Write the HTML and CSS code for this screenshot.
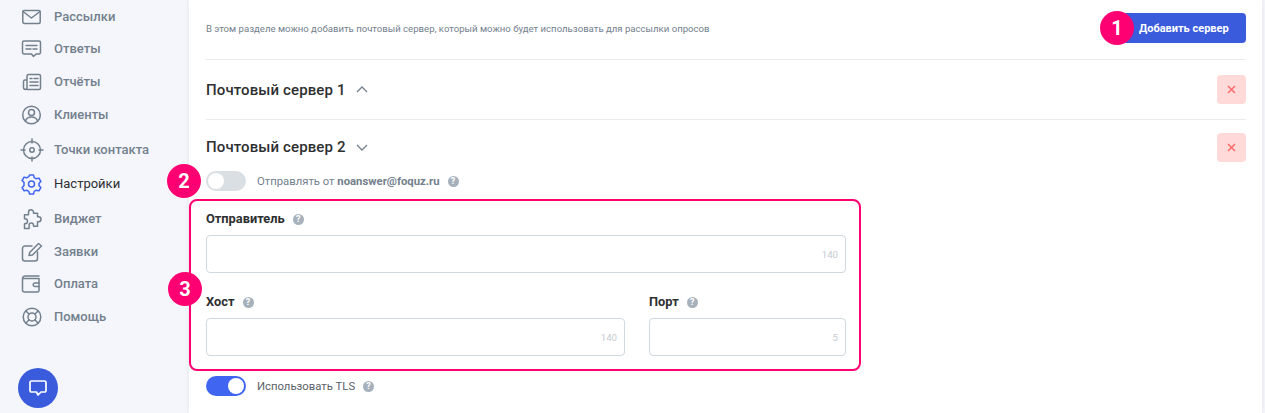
FILE: index.html
```html
<!DOCTYPE html>
<html lang="ru">
<head>
    <meta charset="UTF-8">
    <meta name="viewport" content="width=device-width, initial-scale=1.0">
    <title>Настройки</title>
    <link rel="stylesheet" href="styles.css">
</head>
<body>

<aside class="sidebar">
    <nav class="nav">
        <a class="nav-item">
            <svg class="nav-icon" width="24" height="16" viewBox="0 0 24 16"><rect x="2.800" y="1.400" width="17.400" height="13" rx="1.500"/><path d="M3 2.500l8.500 6.500 8.500-6.500"/></svg>
            Рассылки
        </a>
        <a class="nav-item">
            <svg class="nav-icon" width="24" height="18" viewBox="0 0 24 18"><path d="M4 1h15a1.500 1.500 0 0 1 1.500 1.500v10a1.500 1.500 0 0 1-1.500 1.500h-3l-2.500 2.500-2-2.500H4a1.500 1.500 0 0 1-1.500-1.500v-10A1.500 1.500 0 0 1 4 1z"/><path d="M6 5.500h11M6 9h5M13 9h4"/></svg>
            Ответы
        </a>
        <a class="nav-item">
            <svg class="nav-icon" width="24" height="18" viewBox="0 0 24 18"><path d="M7 16.500h12a1.500 1.500 0 0 0 1.500-1.500V3A1.500 1.500 0 0 0 19 1.500H8.500A1.500 1.500 0 0 0 7 3v12a1.800 1.800 0 0 1-3.500 0V8.500A1.500 1.500 0 0 1 5 7h2"/><path d="M10 5.500h2M14 5.500h4M10 9h8M10 12.500h8"/></svg>
            Отчёты
        </a>
        <a class="nav-item">
            <svg class="nav-icon" width="24" height="18" viewBox="0 0 24 18"><circle cx="11.500" cy="9" r="8.800"/><circle cx="11.500" cy="6.500" r="3"/><path d="M5.500 15c.8-2.600 3-4 6-4s5.200 1.400 6 4"/></svg>
            Клиенты
        </a>
        <a class="nav-item nav-item-tall">
            <svg class="nav-icon" width="24" height="20" viewBox="0 0 24 20"><circle cx="12" cy="10" r="8.500"/><circle cx="12" cy="10" r="2.200"/><path d="M12-1v4M12 17v4M1 10h4M19 10h4"/></svg>
            Точки контакта
        </a>
        <a class="nav-item nav-item-active">
            <svg class="nav-icon" width="24" height="20" viewBox="0 0 24 20"><circle cx="11.500" cy="10" r="3"/><path d="M9.500 1h4l.7 2.600 2.100 1.200 2.600-.7 2 3.400-1.900 1.900v2.200l1.900 1.900-2 3.400-2.600-.7-2.100 1.200-.7 2.600h-4l-.7-2.600-2.100-1.200-2.600.7-2-3.400 1.900-1.900V8.400L2.100 6.500l2-3.400 2.600.7 2.100-1.200z"/></svg>
            Настройки
        </a>
        <a class="nav-item">
            <svg class="nav-icon" width="24" height="20" viewBox="0 0 24 20"><path d="M11 .700a2.500 2.500 0 0 1 2.500 2.500v1h4v3.500h1a2.500 2.500 0 0 1 0 5h-1v4.500h-4v-1a2.200 2.200 0 0 0-4.400 0v3.200H4.500v-4.700H5a2.500 2.500 0 0 0 0-5h-.5V5.700h4V3.200A2.500 2.500 0 0 1 11 .7z"/></svg>
            Виджет
        </a>
        <a class="nav-item">
            <svg class="nav-icon" width="24" height="16" viewBox="0 1 24 16"><path d="M12 3H5a2.500 2.500 0 0 0-2.500 2.500v10A2.500 2.500 0 0 0 5 18h10a2.500 2.500 0 0 0 2.500-2.500V9"/><path d="M9 12.500l.7-3L18.500.5 21.500 3l-9 9z"/></svg>
            Заявки
        </a>
        <a class="nav-item">
            <svg class="nav-icon" width="24" height="18" viewBox="0 -1 24 18"><path d="M19 0H5a2.500 2.500 0 0 0-2.500 2.500V14A2 2 0 0 0 4.500 16h13a1.500 1.500 0 0 0 1.500-1.500V2.500H3"/><path d="M19 7h-4a1.800 1.800 0 0 0 0 3.600h4"/></svg>
            Оплата
        </a>
        <a class="nav-item">
            <svg class="nav-icon" width="24" height="18" viewBox="0 0 24 18"><circle cx="12" cy="9" r="8.800"/><circle cx="12" cy="9" r="4"/><path d="M6 3l3.200 3.200M18 3l-3.200 3.200M6 15l3.200-3.200M18 15l-3.200-3.200"/></svg>
            Помощь
        </a>
    </nav>
    <button class="chat-btn">
        <svg width="20" height="20" viewBox="0 0 20 20" fill="none" stroke="#fff" stroke-width="1.700" stroke-linejoin="round"><path d="M3.500 3h13A1.500 1.500 0 0 1 18 4.500v8a1.500 1.500 0 0 1-1.500 1.500H13l-3 3-1.500-3h-5A1.500 1.500 0 0 1 2 12.500v-8A1.500 1.500 0 0 1 3.500 3z"/></svg>
    </button>
</aside>

<main class="main">
    <div class="intro">
        <p class="intro-text">В этом разделе можно добавить почтовый сервер, который можно будет использовать для рассылки опросов</p>
        <button class="add-btn">
            <span class="step step-1">1</span>
            Добавить сервер
        </button>
    </div>

    <div class="server server-first">
        <h2 class="server-title">Почтовый сервер 1
            <svg class="chevron" width="12" height="7" viewBox="0 0 12 7"><path d="M1 6l5-5 5 5"/></svg>
        </h2>
        <button class="delete-btn"><svg width="9" height="9" viewBox="0 0 9 9"><path d="M1 1l7 7M8 1L1 8"/></svg></button>
    </div>

    <div class="server server-second">
        <h2 class="server-title">Почтовый сервер 2
            <svg class="chevron" width="12" height="7" viewBox="0 0 12 7"><path d="M1 1l5 5 5-5"/></svg>
        </h2>
        <button class="delete-btn"><svg width="9" height="9" viewBox="0 0 9 9"><path d="M1 1l7 7M8 1L1 8"/></svg></button>
    </div>

    <div class="switch-row">
        <span class="step step-2">2</span>
        <span class="switch"></span>
        <span class="switch-label">Отправлять от <b>noanswer@foquz.ru</b></span>
        <span class="hint">?</span>
    </div>

    <div class="fields">
        <span class="step step-3">3</span>
        <div class="field">
            <label class="field-label">Отправитель <span class="hint">?</span></label>
            <div class="input"><span class="counter">140</span></div>
        </div>
        <div class="field-row">
            <div class="field field-host">
                <label class="field-label">Хост <span class="hint">?</span></label>
                <div class="input"><span class="counter">140</span></div>
            </div>
            <div class="field field-port">
                <label class="field-label">Порт <span class="hint">?</span></label>
                <div class="input"><span class="counter">5</span></div>
            </div>
        </div>
    </div>

    <div class="switch-row switch-row-tls">
        <span class="switch switch-on"></span>
        <span class="switch-label switch-label-dark">Использовать TLS</span>
        <span class="hint">?</span>
    </div>
</main>

</body>
</html>
```

FILE: styles.css
```css
* {
    box-sizing: border-box;
}
html, body {
    height: 413px;
    overflow: hidden;
}
body {
    margin: 0;
    display: flex;
    font-family: 'Roboto', sans-serif;
    background-color: #f5f6fb;
    color: #2e2f31;
}
button {
    font-family: inherit;
    border: none;
    padding: 0;
}

/* sidebar */
.sidebar {
    width: 189px;
    height: 413px;
    flex-shrink: 0;
    display: flex;
    flex-direction: column;
    padding: 9px 0 5px 20px;
}
.nav {
    display: flex;
    flex-direction: column;
    gap: 15px;
}
.nav-item {
    display: flex;
    align-items: center;
    gap: 10px;
    font-size: 13px;
    font-weight: 500;
    line-height: 16px;
    color: #73808d;
}
.nav-item-tall {
    margin-top: 1px;
    margin-bottom: -1px;
}
.nav-item-active {
    color: #2e2f31;
    font-weight: 400;
}
.nav-icon {
    overflow: visible;
    fill: none;
    stroke: #73808d;
    stroke-width: 1.5;
    stroke-linejoin: round;
    stroke-linecap: round;
}
.nav-item-active .nav-icon {
    stroke: #3f65f1;
}
.chat-btn {
    margin-top: auto;
    margin-left: -2px;
    width: 40px;
    height: 40px;
    border-radius: 50%;
    background-color: #3a5cdc;
    display: flex;
    align-items: center;
    justify-content: center;
}

/* main column */
.main {
    flex: 1;
    height: 413px;
    margin-right: 3px;
    padding: 0 16px 0 17px;
    background-color: #fff;
    box-shadow: 0 0 4px rgba(115, 128, 141, 0.15);
}
.intro {
    height: 60px;
    padding-top: 13px;
    display: flex;
    justify-content: space-between;
    align-items: flex-start;
    border-bottom: 1px solid #e7ebed;
}
.intro-text {
    margin: 0;
    font-size: 9.6px;
    line-height: 31px;
    color: #73808d;
}
.add-btn {
    position: relative;
    width: 134px;
    height: 30px;
    padding-left: 27px;
    text-align: left;
    border-radius: 4px;
    background-color: #3a5cdc;
    color: #fff;
    font-size: 11px;
    font-weight: 700;
}
.server {
    display: flex;
    justify-content: space-between;
    align-items: center;
}
.server-first {
    height: 60px;
    border-bottom: 1px solid #e7ebed;
}
.server-second {
    height: 54px;
}
.server-title {
    margin: 0;
    display: flex;
    align-items: center;
    gap: 10px;
    font-size: 15px;
    font-weight: 500;
    letter-spacing: 0.12px;
    color: #2e2f31;
}
.chevron {
    fill: none;
    stroke: #73808d;
    stroke-width: 1.3;
}
.delete-btn {
    width: 29px;
    height: 29px;
    border-radius: 4px;
    background-color: #ffdad8;
    display: flex;
    align-items: center;
    justify-content: center;
}
.delete-btn svg {
    fill: none;
    stroke: #ff6b6b;
    stroke-width: 1.5;
}

/* toggles */
.switch-row {
    position: relative;
    height: 20px;
    margin-top: -3px;
    display: flex;
    align-items: center;
    font-size: 11.3px;
    color: #73808d;
}
.switch-row-tls {
    margin-top: 5px;
}
.switch {
    position: relative;
    width: 40px;
    height: 20px;
    margin-right: 11px;
    border-radius: 10px;
    background-color: #dadfe3;
}
.switch::after {
    content: "";
    position: absolute;
    top: 2px;
    left: 2px;
    width: 16px;
    height: 16px;
    border-radius: 50%;
    background-color: #fff;
}
.switch-on {
    background-color: #3f65f1;
}
.switch-on::after {
    left: 22px;
}
.switch-label b {
    font-weight: 700;
}
.switch-label-dark {
    color: #5a6168;
}
.hint {
    display: inline-block;
    width: 11px;
    height: 11px;
    margin-left: 8px;
    border-radius: 50%;
    background-color: #a6b1bc;
    color: #fff;
    font-size: 9px;
    font-weight: 700;
    line-height: 11px;
    text-align: center;
    vertical-align: 1px;
}

/* framed fields */
.fields {
    position: relative;
    margin: 8px 0 0 -17px;
    width: 672px;
    height: 172px;
    padding: 9px 13px 0 15px;
    border: 2px solid #ff0073;
    border-radius: 8px;
}
.field-label {
    display: block;
    height: 25px;
    font-size: 12.8px;
    font-weight: 700;
    line-height: 17px;
    color: #2e2f31;
}
.field-label .hint {
    margin-left: 5px;
}
.input {
    height: 38px;
    padding-right: 7px;
    display: flex;
    align-items: center;
    justify-content: flex-end;
    border: 1px solid #cfd8dc;
    border-radius: 4px;
}
.counter {
    font-size: 9.6px;
    color: #c4cbd0;
}
.field-row {
    margin-top: 20px;
    display: flex;
    gap: 24px;
}
.field-host {
    width: 419px;
}
.field-port {
    width: 197px;
}

/* pink step badges lying over the page */
.step {
    position: absolute;
    width: 34px;
    height: 34px;
    border-radius: 50%;
    background-color: #ff0073;
    color: #fff;
    font-size: 20px;
    font-weight: 700;
    line-height: 34px;
    text-align: center;
}
.step-1 {
    left: -12px;
    top: -2px;
}
.step-2 {
    left: -39px;
    top: -7px;
}
.step-3 {
    left: -23px;
    top: 71px;
}
```
